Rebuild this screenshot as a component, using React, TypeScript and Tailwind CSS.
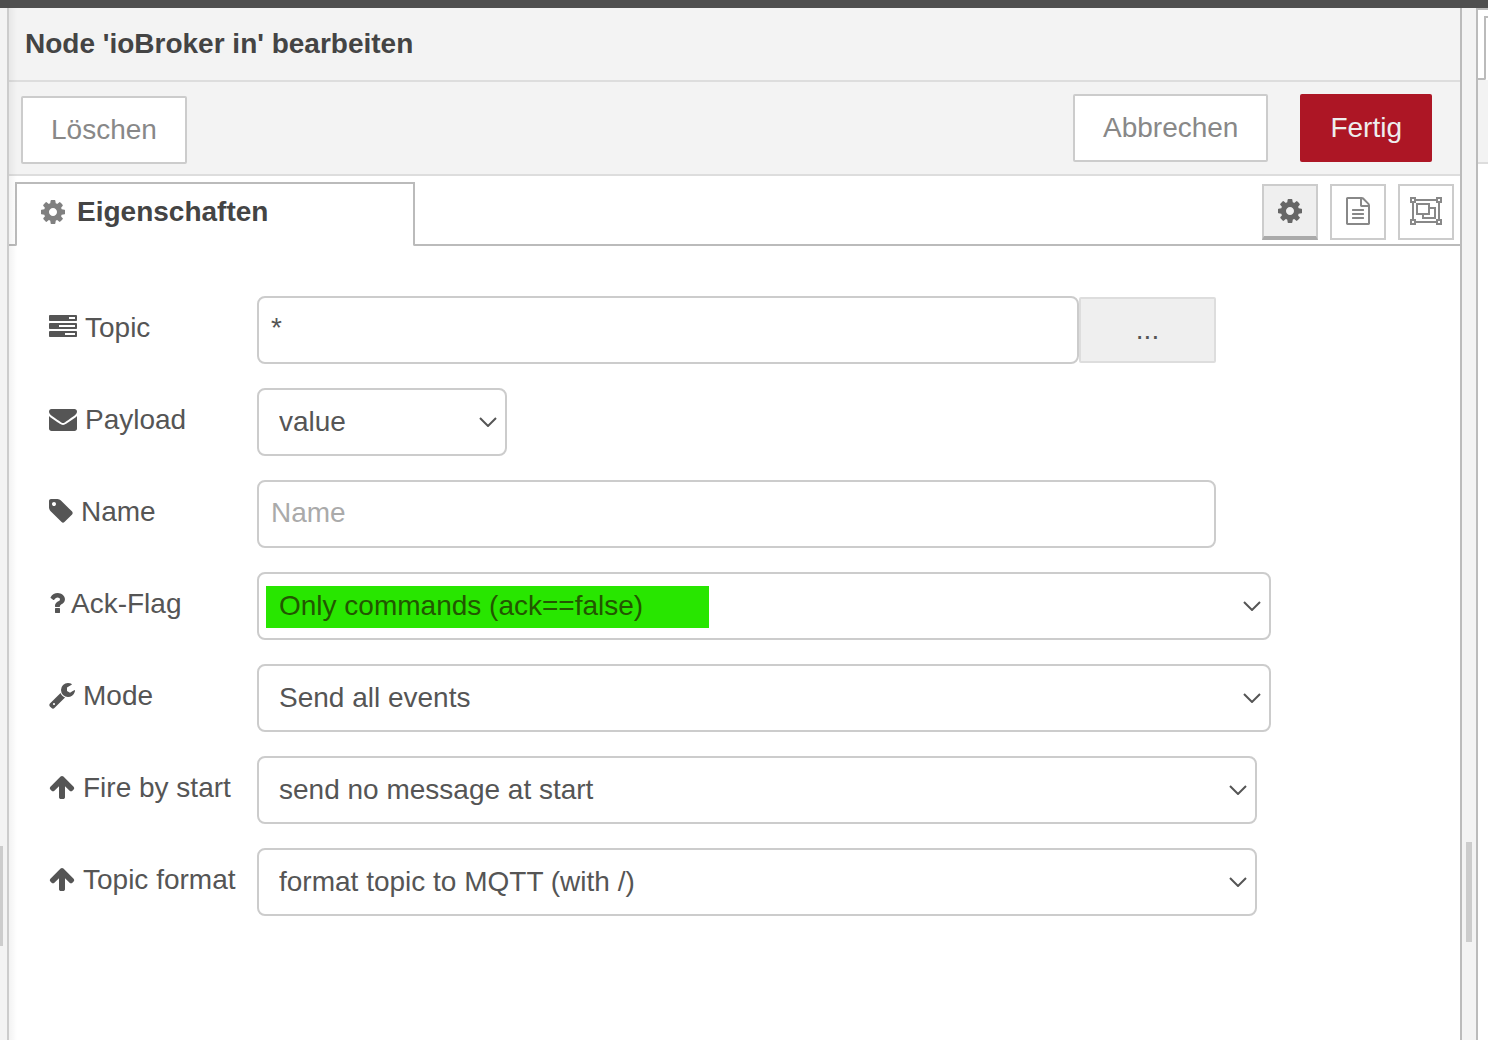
import React from "react";

type IconProps = { d: string; box: string; className?: string };

function Glyph({ d, box, className }: IconProps) {
  return (
    <svg viewBox={box} fill="currentColor" aria-hidden="true" className={className}>
      <path d={d} />
    </svg>
  );
}

const COG =
  "M1024 896q0-106-75-181t-181-75-181 75-75 181 75 181 181 75 181-75 75-181zm512-109v222q0 12-8 23t-20 13l-185 28q-19 54-39 91 35 50 107 138 10 12 10 25t-9 23q-27 37-99 108t-94 71q-12 0-26-9l-138-108q-44 23-91 38-16 136-29 186-7 28-36 28h-222q-14 0-24.5-8.5t-11.5-21.5l-28-184q-49-16-90-37l-141 107q-10 9-25 9-14 0-25-11-126-114-165-168-7-10-7-23 0-12 8-23 15-21 51-66.5t54-70.5q-27-50-41-99l-183-27q-13-2-21-12.5t-8-23.5v-222q0-12 8-23t19-13l186-28q14-46 39-92-40-57-107-138-10-12-10-24 0-10 9-23 26-36 98.5-107.5t94.5-71.5q13 0 26 10l138 107q44-23 91-38 16-136 29-186 7-28 36-28h222q14 0 24.5 8.5t11.5 21.5l28 184q49 16 90 37l142-107q9-9 24-9 13 0 25 10 129 119 165 170 7 8 7 22 0 12-8 23-15 21-51 66.5t-54 70.5q26 50 41 98l183 28q13 2 21 12.5t8 23.5z";
const FILE =
  "M1596 380q28 28 48 76t20 88v1152q0 40-28 68t-68 28h-1344q-40 0-68-28t-28-68v-1600q0-40 28-68t68-28h896q40 0 88 20t76 48zm-444-244v376h376q-10-29-22-41l-313-313q-12-12-41-22zm384 1528v-1024h-416q-40 0-68-28t-28-68v-416h-768v1536h1280zm-1024-864q0-14 9-23t23-9h704q14 0 23 9t9 23v64q0 14-9 23t-23 9h-704q-14 0-23-9t-9-23v-64zm736 224q14 0 23 9t9 23v64q0 14-9 23t-23 9h-704q-14 0-23-9t-9-23v-64q0-14 9-23t23-9h704zm0 256q14 0 23 9t9 23v64q0 14-9 23t-23 9h-704q-14 0-23-9t-9-23v-64q0-14 9-23t23-9h704z";
const TASKS =
  "M1024 1408h640v-128h-640v128zm-384-512h1024v-128h-1024v128zm640-512h384v-128h-384v128zm512 832v256q0 26-19 45t-45 19h-1664q-26 0-45-19t-19-45v-256q0-26 19-45t45-19h1664q26 0 45 19t19 45zm0-512v256q0 26-19 45t-45 19h-1664q-26 0-45-19t-19-45v-256q0-26 19-45t45-19h1664q26 0 45 19t19 45zm0-512v256q0 26-19 45t-45 19h-1664q-26 0-45-19t-19-45v-256q0-26 19-45t45-19h1664q26 0 45 19t19 45z";
const ENVELOPE =
  "M1792 710v794q0 66-47 113t-113 47h-1472q-66 0-113-47t-47-113v-794q44 49 101 87 362 246 497 345 57 42 92.5 65.5t94.5 48 110 24.5h2q51 0 110-24.5t94.5-48 92.5-65.5q170-123 498-345 57-39 100-87zm0-294q0 79-49 151t-122 123q-376 261-468 325-10 7-42.5 31t-54 38.5-52 32.5-57.5 27-50 9h-2q-23 0-50-9t-57.5-27-52-32.5-54-38.5-42.5-31q-91-64-262-182.5t-205-142.5q-62-42-117-115.5t-55-136.5q0-78 41.5-130t118.5-52h1472q65 0 112.5 47t47.5 113z";
const TAG =
  "M448 448q0-53-37.5-90.5t-90.5-37.5-90.5 37.5-37.5 90.5 37.5 90.5 90.5 37.5 90.5-37.5 37.5-90.5zm1067 576q0 53-37 90l-491 492q-39 37-91 37-53 0-90-37l-715-716q-38-37-64.5-101t-26.5-117v-416q0-52 38-90t90-38h416q53 0 117 26.5t102 64.5l715 714q37 39 37 91z";
const QUESTION =
  "M1088 1256v240q0 16-12 28t-28 12h-240q-16 0-28-12t-12-28v-240q0-16 12-28t28-12h240q16 0 28 12t12 28zm316-600q0 54-15.5 101t-35 76.5-55 59.5-57.5 43.5-61 35.5q-41 23-68.5 65t-27.5 67q0 17-12 32.5t-28 15.5h-240q-15 0-25.5-18.5t-10.5-37.5v-45q0-83 65-156.5t143-108.5q59-27 84-56t25-76q0-42-46.5-74t-107.5-32q-65 0-108 29-35 25-107 115-13 16-31 16-12 0-25-8l-164-125q-13-10-15.5-25t5.5-28q160-266 464-266 80 0 161 31t146 83 106 127.5 41 158.5z";
const WRENCH =
  "M448 1472q0-26-19-45t-45-19-45 19-19 45 19 45 45 19 45-19 19-45zm644-420l-682 682q-37 37-90 37-52 0-91-37l-106-108q-38-36-38-90 0-53 38-91l681-681q39 98 114.5 173.5t173.5 114.5zm634-435q0 39-23 106-47 134-164.5 217.5t-258.5 83.5q-185 0-316.5-131.5t-131.5-316.5 131.5-316.5 316.5-131.5q58 0 121.5 16.5t107.5 46.5q16 11 16 28t-16 28l-293 169v224l193 107q5-3 79-48.5t135.5-81 70.5-35.5q15 0 23.5 10t8.5 25z";
const ARROW =
  "M1675 971q0 51-37 90l-75 75q-38 38-91 38-54 0-90-38l-294-293v704q0 52-37.5 84.5t-90.5 32.5h-128q-53 0-90.5-32.5t-37.5-84.5v-704l-294 293q-36 38-90 38t-90-38l-75-75q-38-38-38-90 0-53 38-91l651-651q35-37 90-37 54 0 91 37l651 651q37 39 37 91z";

function ObjectGroup() {
  return (
    <svg viewBox="0 0 32 28" fill="none" stroke="currentColor" strokeWidth="2" aria-hidden="true" className="h-7 w-8">
      <path d="M6 3h20M6 25h20M3 6v16M29 6v16" />
      <path d="M1 1h4v4h-4zM27 1h4v4h-4zM1 23h4v4h-4zM27 23h4v4h-4z" />
      <path d="M7 7h12v10h-12zM19 11h6v10h-12v-4" />
    </svg>
  );
}

function Row({ id, label, icon, children }: { id: string; label: string; icon: React.ReactNode; children: React.ReactNode }) {
  return (
    <div className="flex h-[68px]">
      <label htmlFor={id} className="flex w-52 shrink-0 items-center gap-2 pb-1 whitespace-nowrap">
        <span className="pb-0.5">{icon}</span>
        {label}
      </label>
      {children}
    </div>
  );
}

function Select({ id, value, width, marked }: { id: string; value: string; width: string; marked?: boolean }) {
  return (
    <div className={`relative ${width}`}>
      {marked && <div className="absolute top-3.5 left-[9px] h-[42px] w-[443px] max-w-[80%] bg-[#28e600]" />}
      <select
        id={id}
        className={`relative h-full w-full appearance-none rounded-lg border-2 border-[#ccc] bg-transparent px-5 ${marked ? "text-[#225700]" : ""}`}
      >
        <option>{value}</option>
      </select>
      <svg viewBox="0 0 18 10" fill="none" stroke="#555" strokeWidth="2" aria-hidden="true" className="pointer-events-none absolute top-[29px] right-2.5 h-2.5 w-[18px]">
        <path d="M1 1l8 8l8-8" />
      </svg>
    </div>
  );
}

export default function App() {
  return (
    <div className="flex min-h-screen flex-col overflow-hidden bg-[#f3f3f3] font-['Liberation_Sans',Arial,sans-serif] text-[28px] leading-8 text-[#555]">
      <div className="h-2 bg-[#4f4f4f]" />
      <div className="flex flex-1">
        <div className="w-[7px] shrink-0 pt-[838px]">
          <div className="h-[100px] w-[3px] bg-[#ccc]" />
        </div>

        <main className="relative flex min-w-0 flex-1 flex-col border-r-2 border-l-2 border-r-[#bbb] border-l-[#ccc] bg-white">
          <div className="pointer-events-none absolute inset-y-0 left-0 w-2 bg-linear-to-r from-black/5 to-transparent" />
          <header className="flex h-[74px] items-center border-b-2 border-[#ddd] bg-[#f3f3f3] px-4">
            <h1 className="font-bold text-[#444]">Node 'ioBroker in' bearbeiten</h1>
          </header>

          <div className="flex items-start border-b-2 border-[#ddd] bg-[#f3f3f3] pt-3 pr-7 pb-2.5 pl-3 text-[#888]">
            <button className="mt-0.5 h-[68px] rounded-xs border-2 border-[#ccc] bg-white px-7">Löschen</button>
            <button className="ml-auto h-[68px] rounded-xs border-2 border-[#ccc] bg-white px-7">Abbrechen</button>
            <button className="ml-8 h-[68px] rounded-xs bg-[#ad1625] px-[30px] text-[#eee]">Fertig</button>
          </div>

          <div className="flex h-[70px] pt-1.5">
            <div className="w-2 rounded-br-xs border-r-2 border-b-2 border-[#bbb]" />
            <button className="flex w-[396px] items-center gap-3 border-t-2 border-[#bbb] pb-1.5 pl-6 font-bold text-[#444]">
              <Glyph d={COG} box="0 128 1536 1536" className="size-6 text-[#808080]" />
              Eigenschaften
            </button>
            <div className="flex flex-1 justify-end gap-3 rounded-bl-xs border-b-2 border-l-2 border-[#bbb] pt-0.5 pr-1.5 text-[#888]">
              <button aria-label="Eigenschaften" className="flex size-14 items-center justify-center border-2 border-b-4 border-[#ccc] border-b-[#aaa] bg-[#efefef] text-[#666]">
                <Glyph d={COG} box="0 128 1536 1536" className="size-6" />
              </button>
              <button aria-label="Beschreibung" className="flex size-14 items-center justify-center border-2 border-[#ccc] pb-0.5">
                <Glyph d={FILE} box="128 0 1536 1792" className="h-7 w-6" />
              </button>
              <button aria-label="Erscheinungsbild" className="flex size-14 items-center justify-center border-2 border-[#ccc] pb-0.5">
                <ObjectGroup />
              </button>
            </div>
          </div>

          <form className="flex flex-col gap-6 pt-[50px] pr-[41px] pb-10 pl-10">
            <Row id="topic" label="Topic" icon={<Glyph d={TASKS} box="0 0 1792 1792" className="size-7" />}>
              <input id="topic" defaultValue="*" className="w-[60%] rounded-lg border-2 border-[#ccc] px-3 pb-1" />
              <button type="button" className="my-px w-[10%] rounded-xs border-2 border-[#ddd] bg-[#efefef]">...</button>
            </Row>
            <Row id="payload" label="Payload" icon={<Glyph d={ENVELOPE} box="0 0 1792 1792" className="size-7" />}>
              <Select id="payload" value="value" width="w-[250px]" />
            </Row>
            <Row id="name" label="Name" icon={<Glyph d={TAG} box="0 0 1536 1792" className="h-7 w-6" />}>
              <input id="name" placeholder="Name" className="w-[70%] rounded-lg border-2 border-[#ccc] px-3 pb-0.5 placeholder:text-[#aaa]" />
            </Row>
            <Row id="ack" label="Ack-Flag" icon={<Glyph d={QUESTION} box="384 0 896 1792" className="h-7 w-3.5 overflow-visible" />}>
              <Select id="ack" value="Only commands (ack==false)" width="w-[74%]" marked />
            </Row>
            <Row id="mode" label="Mode" icon={<Glyph d={WRENCH} box="64 0 1664 1792" className="h-7 w-[26px]" />}>
              <Select id="mode" value="Send all events" width="w-[74%]" />
            </Row>
            <Row id="fire" label="Fire by start" icon={<Glyph d={ARROW} box="64 0 1664 1792" className="h-7 w-[26px]" />}>
              <Select id="fire" value="send no message at start" width="w-[73%]" />
            </Row>
            <Row id="format" label="Topic format" icon={<Glyph d={ARROW} box="64 0 1664 1792" className="h-7 w-[26px]" />}>
              <Select id="format" value="format topic to MQTT (with /)" width="w-[73%]" />
            </Row>
          </form>
        </main>

        <div className="w-3.5 shrink-0 pt-[834px]">
          <div className="mx-auto h-[100px] w-1.5 bg-[#ccc]" />
        </div>

        <aside className="flex w-3 shrink-0 flex-col border-t-2 border-l-2 border-[#bbb] bg-white">
          <div className="flex h-[70px] pt-1.5">
            <div className="w-2 rounded-br-xs border-r-2 border-b-2 border-[#bbb]" />
            <div className="flex-1 border-t-2 border-[#bbb]" />
          </div>
          <div className="h-[84px] border-b-2 border-[#ddd] bg-[#f3f3f3]" />
        </aside>
      </div>
    </div>
  );
}
